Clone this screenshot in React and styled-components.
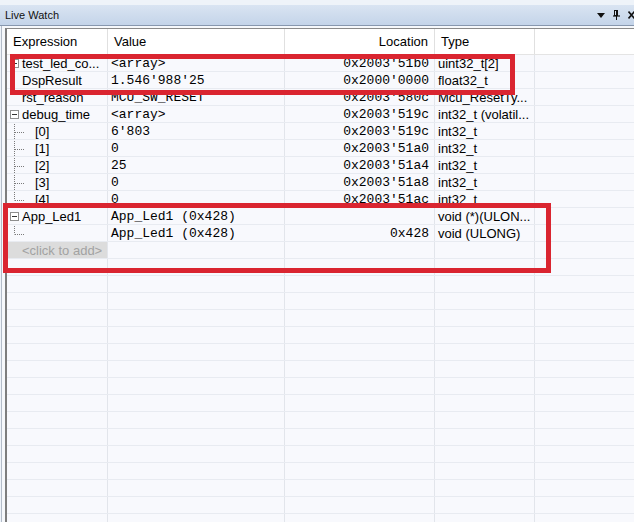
import React from "react";
import styled, { createGlobalStyle } from "styled-components";

const rows = [
  { kind: "closed", name: "test_led_co...", value: "<array>", loc: "0x2003'51b0", type: "uint32_t[2]" },
  { kind: "leaf", name: "DspResult", value: "1.546'988'25", loc: "0x2000'0000", type: "float32_t" },
  { kind: "leaf", name: "rst_reason", value: "MCU_SW_RESET", loc: "0x2003'580c", type: "Mcu_ResetTy..." },
  { kind: "open", name: "debug_time", value: "<array>", loc: "0x2003'519c", type: "int32_t (volatil..." },
  { kind: "child", name: "[0]", value: "6'803", loc: "0x2003'519c", type: "int32_t" },
  { kind: "child", name: "[1]", value: "0", loc: "0x2003'51a0", type: "int32_t" },
  { kind: "child", name: "[2]", value: "25", loc: "0x2003'51a4", type: "int32_t" },
  { kind: "child", name: "[3]", value: "0", loc: "0x2003'51a8", type: "int32_t" },
  { kind: "lastChild", name: "[4]", value: "0", loc: "0x2003'51ac", type: "int32_t" },
  { kind: "open", name: "App_Led1", value: "App_Led1 (0x428)", loc: "", type: "void (*)(ULON..." },
  { kind: "lastChild", name: "", value: "App_Led1 (0x428)", loc: "0x428", type: "void (ULONG)" },
];

const EMPTY_ROWS = 17;

function Toggle({ open }) {
  return (
    <ToggleBox width="9" height="9" viewBox="0 0 9 9">
      <rect x="0.5" y="0.5" width="8" height="8" fill="#fff" stroke="#8e8e8e" />
      <line x1="2" y1="4.5" x2="7" y2="4.5" stroke="#333" />
      {!open && <line x1="4.5" y1="2" x2="4.5" y2="7" stroke="#333" />}
    </ToggleBox>
  );
}

function Branch({ last }) {
  return (
    <BranchSvg width="22" height="16" viewBox="0 0 22 16">
      <line x1="4.5" y1="0" x2="4.5" y2={last ? 8.5 : 16} stroke="#7a7a7a" strokeDasharray="1 1" />
      <line x1="5" y1="8.5" x2="15" y2="8.5" stroke="#7a7a7a" strokeDasharray="1 1" />
    </BranchSvg>
  );
}

function ExprCell({ row }) {
  let lead = <Spacer />;
  if (row.kind === "open") lead = <Toggle open />;
  if (row.kind === "closed") lead = <Toggle />;
  if (row.kind === "child") lead = <Branch />;
  if (row.kind === "lastChild") lead = <Branch last />;
  return (
    <Cell>
      {lead}
      <Name>{row.name}</Name>
    </Cell>
  );
}

export default function App() {
  return (
    <>
      <GlobalStyle />
      <Window>
        <TitleBar>
          <Title>Live Watch</Title>
          <Tools>
            <svg width="8" height="5" viewBox="0 0 8 5">
              <polygon points="0,0 8,0 4,5" fill="#111" />
            </svg>
            <svg width="7" height="10" viewBox="0 0 7 10">
              <rect x="1.5" y="0.5" width="3" height="5" fill="none" stroke="#111" />
              <line x1="3.5" y1="0.5" x2="3.5" y2="5" stroke="#111" />
              <line x1="0" y1="6" x2="7" y2="6" stroke="#111" strokeWidth="1.2" />
              <line x1="3.5" y1="6" x2="3.5" y2="10" stroke="#111" />
            </svg>
            <svg width="7" height="8" viewBox="0 0 7 8">
              <path d="M0.5 0.5 L6.5 7.5 M6.5 0.5 L0.5 7.5" stroke="#111" strokeWidth="1.6" />
            </svg>
          </Tools>
        </TitleBar>
        <Frame>
          <Panel>
            <HeaderRow>
              <HeadCell>Expression</HeadCell>
              <HeadCell>Value</HeadCell>
              <HeadCell $right>Location</HeadCell>
              <HeadCell>Type</HeadCell>
              <HeadCell $last />
            </HeaderRow>
            {rows.map((row, i) => (
              <Row key={i}>
                <ExprCell row={row} />
                <MonoCell>{row.value}</MonoCell>
                <MonoCell $right>{row.loc}</MonoCell>
                <TypeCell>{row.type}</TypeCell>
                <Cell $last />
              </Row>
            ))}
            <Row>
              <AddCell>&lt;click to add&gt;</AddCell>
              <Cell />
              <Cell />
              <Cell />
              <Cell $last />
            </Row>
            {Array.from({ length: EMPTY_ROWS }).map((_, i) => (
              <Row key={"e" + i}>
                <Cell />
                <Cell />
                <Cell />
                <Cell />
                <Cell $last />
              </Row>
            ))}
          </Panel>
          <Highlight $x={8} $y={28} $w={505} $h={41} />
          <Highlight $x={1} $y={177} $w={548} $h={70} />
        </Frame>
      </Window>
    </>
  );
}

const GlobalStyle = createGlobalStyle`
  html, body {
    margin: 0;
    padding: 0;
    overflow: hidden;
    background: #ffffff;
  }
`;

const Window = styled.div`
  width: 634px;
  height: 522px;
  overflow: hidden;
  display: flex;
  flex-direction: column;
  background: #eef3f9;
  font-family: "Liberation Sans", Arial, sans-serif;
  color: #000;
`;

const TitleBar = styled.div`
  margin-top: 5px;
  height: 20px;
  flex: none;
  display: flex;
  align-items: center;
  justify-content: space-between;
  padding-left: 5px;
  background: linear-gradient(#d9e4f2, #c4d4e9);
  border-bottom: 1px solid #8797ae;
`;

const Title = styled.span`
  font-size: 11px;
  color: #111;
`;

const Tools = styled.div`
  display: flex;
  align-items: center;
  gap: 8px;
  margin-right: -1px;

  svg {
    display: block;
  }
`;

const Frame = styled.div`
  position: relative;
  flex: 1;
  display: flex;
  margin-left: 1px;
  padding: 2px 0 0 3px;
  border-left: 1px solid #b3bcc9;
  background: #f6f8fb;
  min-height: 0;
`;

const Panel = styled.div`
  flex: 1;
  overflow: hidden;
  border-left: 2px solid #7d7d7d;
  border-top: 1px solid #8a8a8a;
  background: #f8f9fd;
`;

const Row = styled.div`
  display: grid;
  grid-template-columns: 101px 177px 150px 100px 1fr;
  height: 17px;
  box-sizing: border-box;
  border-bottom: 1px solid #e8ebf1;
  font-size: 13px;
`;

const HeaderRow = styled(Row)`
  height: 26px;
  background: #ffffff;
  border-bottom: 1px solid #e4e4e4;
`;

const Cell = styled.div`
  display: flex;
  align-items: center;
  padding-left: 3px;
  padding-top: 1px;
  overflow: hidden;
  white-space: nowrap;
  line-height: 16px;
  border-right: ${(p) => (p.$last ? "none" : "1px solid #e2e5eb")};
`;

const HeadCell = styled(Cell)`
  padding: 0 6px 0 6px;
  justify-content: ${(p) => (p.$right ? "flex-end" : "flex-start")};
  border-right: ${(p) => (p.$last ? "none" : "1px solid #e0e0e0")};
`;

const MonoCell = styled(Cell)`
  font-family: "Liberation Mono", "Courier New", monospace;
  font-size: 13px;
  justify-content: ${(p) => (p.$right ? "flex-end" : "flex-start")};
  padding-right: ${(p) => (p.$right ? "5px" : "0")};
`;

const TypeCell = styled(Cell)`
  padding-left: 3px;
`;

const AddCell = styled(Cell)`
  padding-left: 15px;
  background: #dcdcdc;
  color: #a2a2a2;
`;

const Name = styled.span`
  margin-left: 3px;
`;

const Spacer = styled.span`
  width: 9px;
  flex: none;
`;

const ToggleBox = styled.svg`
  display: block;
  flex: none;
`;

const BranchSvg = styled.svg`
  display: block;
  flex: none;
`;

const Highlight = styled.div`
  position: absolute;
  left: ${(p) => p.$x}px;
  top: ${(p) => p.$y}px;
  width: ${(p) => p.$w}px;
  height: ${(p) => p.$h}px;
  box-sizing: border-box;
  border: 5px solid #da2530;
  pointer-events: none;
`;
